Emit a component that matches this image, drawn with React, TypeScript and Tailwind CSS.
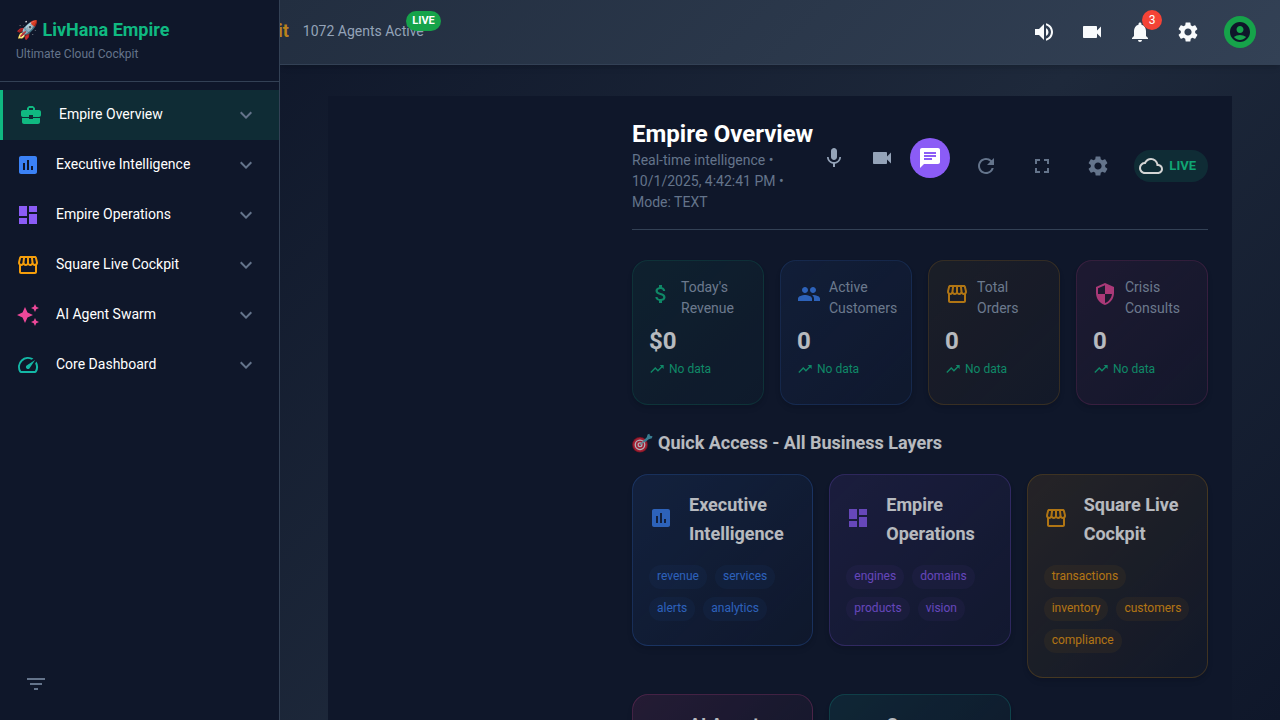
import type { IconType } from 'react-icons';
import {
  MdAccountCircle,
  MdAssessment,
  MdAttachMoney,
  MdAutoAwesome,
  MdBusinessCenter,
  MdChat,
  MdCloudQueue,
  MdDashboard,
  MdExpandMore,
  MdFilterList,
  MdFullscreen,
  MdMic,
  MdNotifications,
  MdPeople,
  MdRefresh,
  MdSecurity,
  MdSettings,
  MdSpeed,
  MdStorefront,
  MdTrendingUp,
  MdVideocam,
  MdVolumeUp,
} from 'react-icons/md';

type NavItem = { label: string; icon: IconType; color: string; active?: boolean };

const navItems: NavItem[] = [
  { label: 'Empire Overview', icon: MdBusinessCenter, color: 'text-[#10b981]', active: true },
  { label: 'Executive Intelligence', icon: MdAssessment, color: 'text-[#3b82f6]' },
  { label: 'Empire Operations', icon: MdDashboard, color: 'text-[#8b5cf6]' },
  { label: 'Square Live Cockpit', icon: MdStorefront, color: 'text-[#f59e0b]' },
  { label: 'AI Agent Swarm', icon: MdAutoAwesome, color: 'text-[#ec4899]' },
  { label: 'Core Dashboard', icon: MdSpeed, color: 'text-[#14b8a6]' },
];

const metrics: { label: string; value: string; icon: IconType; color: string; card: string }[] = [
  {
    label: "Today's Revenue",
    value: '$0',
    icon: MdAttachMoney,
    color: 'text-[#10b981]',
    card: 'border-[#10b981]/20 from-[#10b981]/9 to-[#10b981]/3',
  },
  {
    label: 'Active Customers',
    value: '0',
    icon: MdPeople,
    color: 'text-[#3b82f6]',
    card: 'border-[#3b82f6]/20 from-[#3b82f6]/10 to-[#3b82f6]/3',
  },
  {
    label: 'Total Orders',
    value: '0',
    icon: MdStorefront,
    color: 'text-[#f59e0b]',
    card: 'border-[#f59e0b]/20 from-[#f59e0b]/8 to-[#f59e0b]/3',
  },
  {
    label: 'Crisis Consults',
    value: '0',
    icon: MdSecurity,
    color: 'text-[#ec4899]',
    card: 'border-[#ec4899]/20 from-[#ec4899]/10 to-[#ec4899]/3',
  },
];

type Layer = { title: string; icon: IconType; color: string; card: string; chip: string; tags: string[] };

const layers: Layer[] = [
  {
    title: 'Executive Intelligence',
    icon: MdAssessment,
    color: 'text-[#3b82f6]',
    card: 'border-[#3b82f6]/30 from-[#3b82f6]/14 to-[#3b82f6]/2',
    chip: 'bg-[#3b82f6]/7',
    tags: ['revenue', 'services', 'alerts', 'analytics'],
  },
  {
    title: 'Empire Operations',
    icon: MdDashboard,
    color: 'text-[#8b5cf6]',
    card: 'border-[#8b5cf6]/30 from-[#8b5cf6]/14 to-[#8b5cf6]/4',
    chip: 'bg-[#8b5cf6]/7',
    tags: ['engines', 'domains', 'products', 'vision'],
  },
  {
    title: 'Square Live Cockpit',
    icon: MdStorefront,
    color: 'text-[#f59e0b]',
    card: 'border-[#f59e0b]/25 from-[#f59e0b]/14 to-[#f59e0b]/2',
    chip: 'bg-[#f59e0b]/8',
    tags: ['transactions', 'inventory', 'customers', 'compliance'],
  },
  {
    title: 'AI Agent Swarm',
    icon: MdAutoAwesome,
    color: 'text-[#ec4899]',
    card: 'border-[#ec4899]/30 from-[#ec4899]/14 to-[#ec4899]/2',
    chip: 'bg-[#ec4899]/7',
    tags: [],
  },
  {
    title: 'Core Dashboard',
    icon: MdSpeed,
    color: 'text-[#14b8a6]',
    card: 'border-[#14b8a6]/30 from-[#14b8a6]/14 to-[#14b8a6]/2',
    chip: 'bg-[#14b8a6]/7',
    tags: [],
  },
];

function IconButton({ label, icon: Icon, tone }: { label: string; icon: IconType; tone: string }) {
  return (
    <button type="button" aria-label={label} className={`flex size-10 items-center justify-center rounded-full ${tone}`}>
      <Icon className="size-6" />
    </button>
  );
}

function Sidebar() {
  return (
    <aside className="flex w-[280px] shrink-0 flex-col border-r border-[#334155] bg-[#0f172a]">
      <div className="border-b border-[#334155] px-4 pt-4 pb-[17px]">
        <h1 className="text-lg leading-7 font-bold text-[#10b981]">🚀 LivHana Empire</h1>
        <p className="text-xs leading-5 text-[#64748b]">Ultimate Cloud Cockpit</p>
      </div>
      <nav className="flex-1 py-2">
        <ul>
          {navItems.map(({ label, icon: Icon, color, active }) => (
            <li key={label}>
              <a
                href="#"
                className={`flex h-[50px] items-center gap-4 pr-[21px] pl-4 text-sm text-white ${
                  active ? 'border-l-[3px] border-[#10b981] bg-[#10b981]/13' : ''
                }`}
              >
                <Icon className={`size-6 ${color}`} />
                <span className="flex-1 pb-[2px]">{label}</span>
                <MdExpandMore className="size-6 text-[#64748b]" />
              </a>
            </li>
          ))}
        </ul>
      </nav>
      <div className="p-4">
        <IconButton label="Filter" icon={MdFilterList} tone="text-[#64748b]" />
      </div>
    </aside>
  );
}

function TopBar() {
  return (
    <header className="z-10 flex h-[65px] shrink-0 items-center justify-between border-b border-[#334155] bg-linear-135/srgb from-[#222e40] to-[#334155] pr-6 shadow-md">
      <div className="-ml-[2px] flex items-center gap-[14px] pb-[2px]">
        <span className="text-lg font-bold text-[#b9821c]">it</span>
        <div className="relative">
          <span className="text-sm text-[#94a3b8]">1072 Agents Active</span>
          <span className="absolute -top-2 -right-[17px] flex h-5 items-center rounded-full bg-[#16a34a] px-[6px] text-[11px] font-bold text-white">
            LIVE
          </span>
        </div>
      </div>
      <div className="flex items-center gap-2">
        <IconButton label="Sound" icon={MdVolumeUp} tone="text-[#f8fafc]" />
        <IconButton label="Video" icon={MdVideocam} tone="text-[#f8fafc]" />
        <div className="relative">
          <IconButton label="Notifications" icon={MdNotifications} tone="text-[#f8fafc]" />
          <span className="absolute -top-[2px] -right-[2px] flex size-5 items-center justify-center rounded-full bg-[#f44336] text-xs text-white">
            3
          </span>
        </div>
        <IconButton label="Settings" icon={MdSettings} tone="text-[#f8fafc]" />
        <button
          type="button"
          aria-label="Account"
          className="ml-2 flex size-8 items-center justify-center rounded-full bg-[#16a34a] text-[#0f172a]"
        >
          <MdAccountCircle className="size-6" />
        </button>
      </div>
    </header>
  );
}

function PageHeader() {
  return (
    <div className="flex items-center border-b border-[#334155] pb-4">
      <div className="min-w-0 flex-1">
        <h2 className="mb-px text-2xl leading-[30px] font-bold whitespace-nowrap text-white">Empire Overview</h2>
        <p className="text-sm leading-[21px] text-[#64748b]">
          Real-time intelligence • 10/1/2025, 4:42:41 PM • Mode: TEXT
        </p>
      </div>
      <div className="flex shrink-0 items-center gap-4">
        <div className="mb-4 flex gap-2">
          <IconButton label="Voice mode" icon={MdMic} tone="text-[#94a3b8]" />
          <IconButton label="Video mode" icon={MdVideocam} tone="text-[#94a3b8]" />
          <IconButton label="Text mode" icon={MdChat} tone="bg-[#8b5cf6] text-white" />
        </div>
        <IconButton label="Refresh" icon={MdRefresh} tone="text-[#64748b]" />
        <IconButton label="Full screen" icon={MdFullscreen} tone="text-[#64748b]" />
        <IconButton label="Preferences" icon={MdSettings} tone="text-[#64748b]" />
        <div className="flex h-8 items-center gap-[6px] rounded-full bg-[#10b981]/13 pr-3 pl-[5px]">
          <MdCloudQueue className="size-6 text-[#d4d4d4]" />
          <span className="text-[13px] font-bold text-[#10a574]">LIVE</span>
        </div>
      </div>
    </div>
  );
}

function TargetIcon() {
  return (
    <svg viewBox="0 0 21 20" className="h-5 w-[21px] shrink-0" aria-hidden="true">
      <circle cx="8" cy="11.8" r="7.8" fill="#a3141f" />
      <circle cx="8" cy="11.8" r="7" fill="#e0243a" />
      <circle cx="8" cy="11.8" r="5.4" fill="#f4f4f4" />
      <circle cx="8" cy="11.8" r="4.1" fill="#e0243a" />
      <circle cx="8" cy="11.8" r="2.5" fill="#f4f4f4" />
      <circle cx="8" cy="11.8" r="1.2" fill="#e0243a" />
      <path d="M8.2 11.6 14 6.4" stroke="#8fb8c4" strokeWidth="1.5" />
      <path d="m11 8.2 3.8-4L15.6 1.6 17.4.8l.5 2 2.6.5-.6 1.9-3.2 1.1-3.7 3z" fill="#4aa9bd" />
    </svg>
  );
}

export default function App() {
  return (
    <div className="flex h-screen overflow-hidden bg-[#0f172a] font-['Roboto',sans-serif]">
      <Sidebar />
      <div className="flex min-w-0 flex-1 flex-col overflow-hidden bg-linear-135/srgb from-[#0f172a] via-[#1e293b] to-[#0f172a]">
        <TopBar />
        <main className="min-h-0 flex-1 overflow-hidden px-12 pt-[31px]">
          <div className="min-h-full bg-[#0f172a] pt-[23px] pr-6 pb-6 pl-[304px]">
            <PageHeader />
            <div className="opacity-70">
              <section className="mt-[30px] grid grid-cols-4 gap-4">
                {metrics.map(({ label, value, icon: Icon, color, card }) => (
                  <div key={label} className={`rounded-2xl border bg-linear-135/srgb px-4 pt-4 pb-[25px] shadow-md ${card}`}>
                    <div className="flex items-center gap-2">
                      <Icon className={`mb-2 size-6 shrink-0 ${color}`} />
                      <span className="text-sm leading-[21px] text-[#94a3b8]">{label}</span>
                    </div>
                    <p className="mt-1 text-2xl leading-9 font-bold text-white">{value}</p>
                    <p className="flex items-center gap-1 text-xs leading-5 text-[#10b981]">
                      <MdTrendingUp className="size-4" />
                      No data
                    </p>
                  </div>
                ))}
              </section>
              <h3 className="mt-6 flex items-center gap-[5px] text-lg leading-7 font-bold text-white">
                <TargetIcon />
                Quick Access - All Business Layers
              </h3>
              <section className="mt-[17px] grid grid-cols-3 items-start gap-4">
                {layers.map(({ title, icon: Icon, color, card, chip, tags }) => (
                  <article key={title} className={`rounded-2xl border bg-linear-135/srgb px-4 pt-[15px] pb-6 shadow-md ${card}`}>
                    <div className="flex items-center gap-4">
                      <Icon className={`mb-[2px] size-6 shrink-0 ${color}`} />
                      <h4 className="text-lg leading-[29px] font-bold text-white">{title}</h4>
                    </div>
                    <ul className="mt-[17px] flex flex-wrap gap-2">
                      {tags.map((tag) => (
                        <li key={tag} className={`flex h-6 items-center rounded-full px-2 pb-[2px] text-xs ${chip} ${color}`}>
                          {tag}
                        </li>
                      ))}
                    </ul>
                  </article>
                ))}
              </section>
            </div>
          </div>
        </main>
      </div>
    </div>
  );
}
